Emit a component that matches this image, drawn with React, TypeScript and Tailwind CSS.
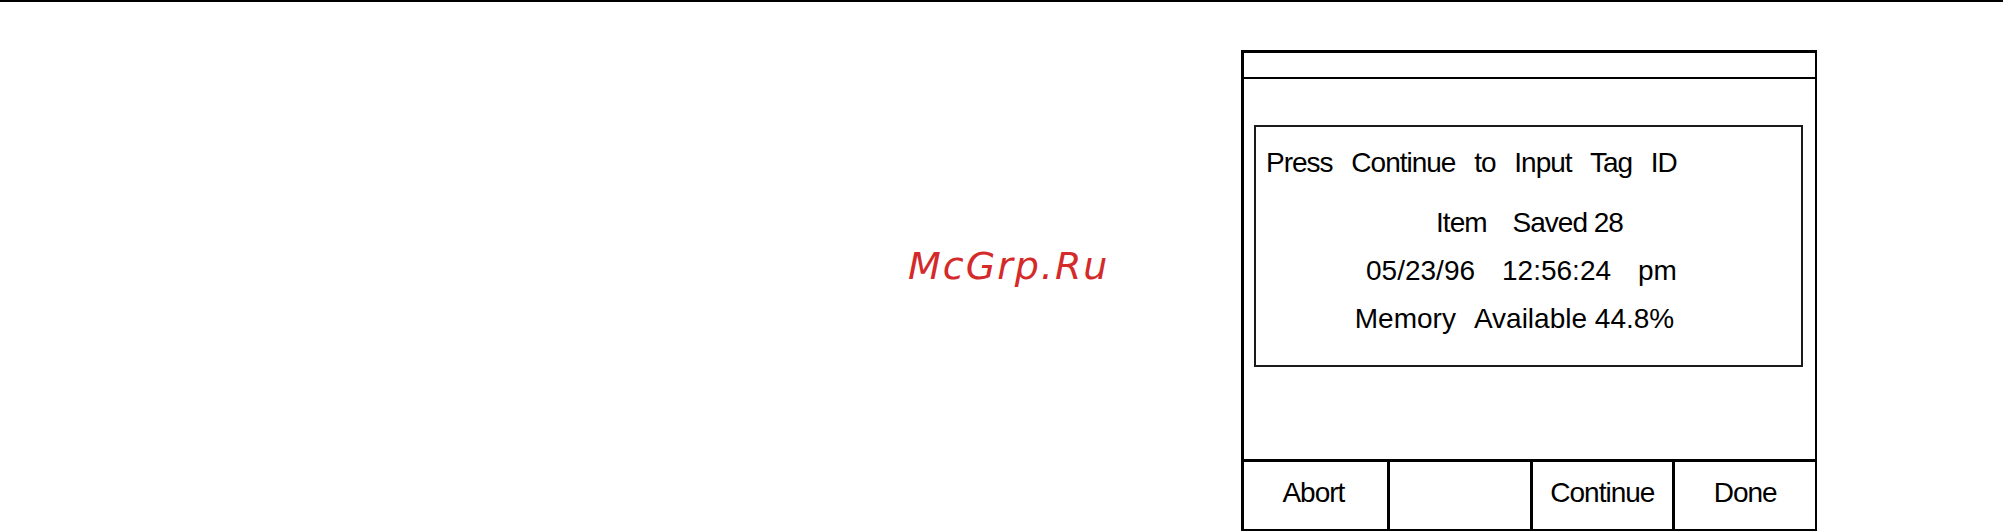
import React from "react";

const SOFT_KEYS = ["Abort", "", "Continue", "Done"];

const font = { fontFamily: '"Liberation Sans", Arial, sans-serif' };

const Line: React.FC<{ children: React.ReactNode; className?: string }> = ({
  children,
  className = "",
}) => (
  <div
    className={`h-[48px] leading-[48px] text-[28px] whitespace-nowrap text-black ${className}`}
  >
    {children}
  </div>
);

const App: React.FC = () => {
  return (
    <div className="w-[2003px] h-[531px] bg-white overflow-hidden flex flex-col" style={font}>
      {/* page rule */}
      <div className="h-[2px] w-full bg-black shrink-0" />

      <div className="flex flex-1 pt-[48px]">
        {/* site stamp */}
        <div className="w-[1241px] shrink-0 pl-[908px]">
          <div
            className="mt-[197px] text-[38px] leading-[38px] italic tracking-[2px] text-[#d42a2a]"
            style={{ fontFamily: '"DejaVu Sans", Verdana, sans-serif' }}
          >
            McGrp.Ru
          </div>
        </div>

        {/* instrument display */}
        <div className="w-[576px] h-[481px] shrink-0 flex flex-col border-l-[3px] border-t-[3px] border-r-[2px] border-b-[2px] border-black">
          <div className="h-[26px] shrink-0 border-b-[2px] border-black" />

          <div className="flex-1 pt-[46px] pl-[10px] pr-[12px]">
            <div className="h-[242px] border-2 border-[#1a1a1a] pl-[10px] pt-[12px]">
              <Line className="tracking-[-1px] [word-spacing:12px]">Press Continue to Input Tag ID</Line>
              <Line className="mt-[12px] flex justify-center gap-[26px] pr-[8px] tracking-[-1px]">
                <span>Item</span>
                <span>Saved 28</span>
              </Line>
              <Line className="flex justify-center gap-[27px] pr-[24px]">
                <span>05/23/96</span>
                <span>12:56:24</span>
                <span>pm</span>
              </Line>
              <Line className="flex justify-center gap-[18px] pr-[38px]">
                <span>Memory</span>
                <span>Available 44.8%</span>
              </Line>
            </div>
          </div>

          <div className="h-[70px] shrink-0 grid grid-cols-4 border-t-[3px] border-black">
            {SOFT_KEYS.map((label, i) => (
              <div
                key={i}
                className={`flex items-center justify-center pb-[6px] text-[28px] tracking-[-1px] text-black ${
                  i > 0 ? "border-l-[3px] border-black" : "pr-[4px]"
                }`}
              >
                {label}
              </div>
            ))}
          </div>
        </div>
      </div>
    </div>
  );
};

export default App;
